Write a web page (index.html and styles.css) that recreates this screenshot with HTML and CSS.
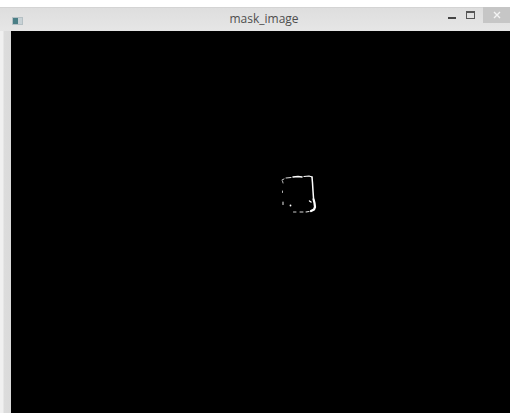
FILE: index.html
```html
<!DOCTYPE html>
<html>
<head>
<meta charset="utf-8">
<title>mask_image</title>
<link rel="stylesheet" href="styles.css">
</head>
<body>
<div class="window">
  <div class="titlebar">
    <div class="app-icon"><span class="app-icon-fill"></span></div>
    <div class="title">mask_image</div>
    <div class="controls">
      <div class="ctl ctl-min"><span class="min-bar"></span></div>
      <div class="ctl ctl-max"><span class="max-box"></span></div>
      <div class="ctl ctl-close">
        <svg width="10" height="10" viewBox="0 0 10 10"><path d="M2 2 L8 8 M8 2 L2 8" stroke="#f4f4f4" stroke-width="1.4"/></svg>
      </div>
    </div>
  </div>
  <div class="client">
    <div class="frame-left"></div>
    <div class="canvas">
      <svg class="mask" width="499" height="382" viewBox="0 0 499 382">
        <defs>
          <filter id="soft" x="-20%" y="-20%" width="140%" height="140%">
            <feGaussianBlur stdDeviation="0.4"/>
          </filter>
        </defs>
        <!-- mask contour, canvas origin is (11,31) in the window -->
        <g filter="url(#soft)" fill="none" stroke="#fff" stroke-linecap="round" stroke-linejoin="round">
          <path d="M271 149 L273 148" stroke-width="1" stroke-opacity="0.8"/>
          <path d="M275 147 L280 146.5" stroke-width="1.1" stroke-opacity="0.85"/>
          <path d="M282 146 L287 145.5 L291 146" stroke-width="1.5"/>
          <path d="M293 145.5 L298 145 L301 146" stroke-width="1.2"/>
          <path d="M301 146 L301.5 152 L302 160 L302.5 167" stroke-width="1.5"/>
          <path d="M302.5 168 L303.5 172 L304 176 L303 178.5 L300 180" stroke-width="2.2"/>
          <path d="M298 180.5 L295 181" stroke-width="1.1" stroke-opacity="0.9"/>
          <path d="M292 181 L289 181" stroke-width="1" stroke-opacity="0.85"/>
          <path d="M285 181 L282.5 181" stroke-width="1" stroke-opacity="0.8"/>
          <path d="M271.5 150 L272 152" stroke-width="1" stroke-opacity="0.7"/>
          <path d="M271.5 160 L271.5 161.5" stroke-width="1" stroke-opacity="0.7"/>
          <path d="M272 171 L272 173.5" stroke-width="1.1" stroke-opacity="0.85"/>
          <circle cx="279.5" cy="174.5" r="0.9" fill="#fff" stroke="none"/>
          <path d="M298.5 170 L300 171" stroke-width="1.4"/>
        </g>
      </svg>
    </div>
  </div>
</div>
</body>
</html>
```
FILE: styles.css
```css
html, body {
  margin: 0;
  padding: 0;
  background: #ffffff;
}

.window {
  width: 510px;
  height: 413px;
  padding-top: 7px;
  box-sizing: border-box;
  display: flex;
  flex-direction: column;
  background: #ffffff;
  overflow: hidden;
}

.titlebar {
  height: 24px;
  display: flex;
  align-items: center;
  position: relative;
  background: linear-gradient(to bottom, #dedede 0%, #e6e6e6 100%);
  border-top: 1px solid #d4d4d4;
  box-sizing: border-box;
  font-family: "Open Sans", "Noto Sans", sans-serif;
}

.app-icon {
  width: 11px;
  height: 8px;
  margin-left: 12px;
  margin-top: 2px;
  background: #c8d2d6;
  border: 1px solid #b5c0c4;
  box-sizing: border-box;
  display: flex;
}

.app-icon-fill {
  width: 5px;
  height: 100%;
  background: #4a7f86;
}

.title {
  position: absolute;
  left: 0;
  right: 0;
  top: 2px;
  text-align: center;
  font-size: 12px;
  color: #4e4e4e;
  margin-left: 18px;
}

.controls {
  margin-left: auto;
  display: flex;
  align-self: flex-start;
  height: 16px;
  margin-top: -1px;
}

.ctl {
  display: flex;
  align-items: center;
  justify-content: center;
}

.ctl-min {
  width: 18px;
}

.min-bar {
  width: 8px;
  height: 2px;
  background: #444;
  margin-top: 6px;
}

.ctl-max {
  width: 18px;
  margin-right: 4px;
}

.max-box {
  width: 9px;
  height: 8px;
  border: 1px solid #555;
  border-top-width: 2px;
  box-sizing: border-box;
}

.ctl-close {
  width: 27px;
  background: #c6c6c6;
}

.client {
  flex: 1;
  display: flex;
}

.frame-left {
  width: 11px;
  background: linear-gradient(to right, #f0f0f0 0px, #f0f0f0 3px, #dcdcdc 4px, #dadada 100%);
}

.canvas {
  flex: 1;
  background: #000000;
  overflow: hidden;
}

.mask {
  display: block;
}
```
